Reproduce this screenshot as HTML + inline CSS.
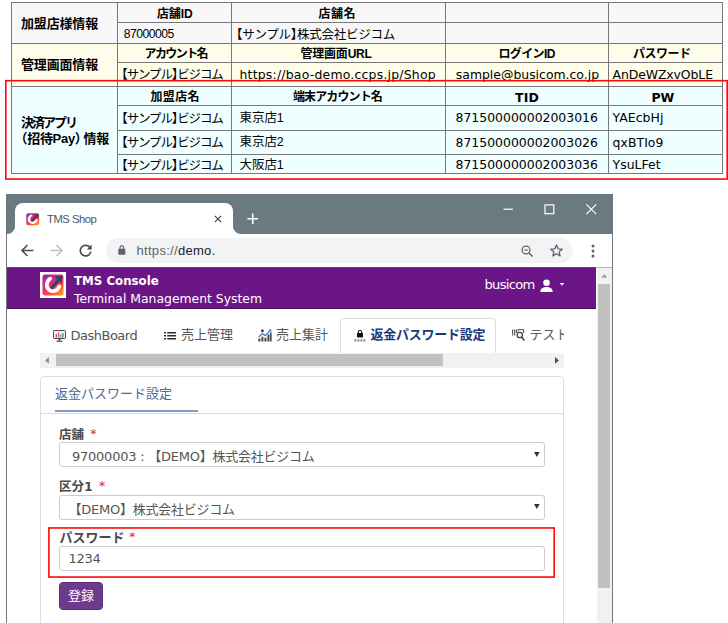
<!DOCTYPE html>
<html lang="ja">
<head>
<meta charset="utf-8">
<title>TMS Shop</title>
<style>
html,body{margin:0;padding:0;background:#fff;}
body{width:728px;height:623px;position:relative;overflow:hidden;font-family:"DejaVu Sans","Noto Sans CJK JP",sans-serif;}
.abs,#tbl div,#tbl span,#win div,#win span{position:absolute;}
#tbl,#win{position:absolute;left:0;top:0;width:728px;height:623px;}
/* ---------- table ---------- */
#tbl .bg{z-index:0;}
#tbl .hl{height:1px;background:#787878;z-index:1;}
#tbl .vl{width:1px;background:#787878;z-index:1;}
#tbl .t{z-index:2;white-space:nowrap;color:#000;line-height:16px;height:16px;}
#tbl .j{font-family:"Liberation Sans","Noto Sans CJK JP",sans-serif;}
#tbl .v{font-family:"DejaVu Sans","Noto Sans CJK JP",sans-serif;}
#tbl .b{font-weight:bold;}
#tbl i{font-style:normal;}
#tbl .lb{margin-left:-6px}#tbl .rb{margin-right:-6px}#tbl .lp{margin-left:-5px}#tbl .rp{margin-right:-4px}

/* ---------- browser window ---------- */
#win{font-family:"DejaVu Sans","Noto Sans CJK JP",sans-serif;}
#win .frame{left:6px;top:194px;width:607px;height:429px;background:#6a7a80;}
#win .page{left:7px;top:234px;width:605px;height:389px;background:#fff;}
#win .tab{left:15px;top:203px;width:218px;height:31px;background:#fff;border-radius:8px 8px 0 0;}
#win .tabl{left:7px;top:226px;width:8px;height:8px;background:radial-gradient(circle at 0 0,rgba(255,255,255,0) 7.5px,#fff 8.5px);}
#win .tabr{left:233px;top:226px;width:8px;height:8px;background:radial-gradient(circle at 100% 0,rgba(255,255,255,0) 7.5px,#fff 8.5px);}
#win .ttl{left:47px;top:210.5px;font:11.3px/16px "Liberation Sans",sans-serif;letter-spacing:-0.5px;color:#50555b;white-space:nowrap;}
#win svg{position:absolute;overflow:visible;}
#win .omni{left:106px;top:238px;width:467px;height:25px;border-radius:12.5px;background:#f1f3f4;}
#win .url{left:136.5px;top:241.5px;font:13px/18px "Liberation Sans",sans-serif;color:#5f6368;white-space:nowrap;letter-spacing:0.3px;}
#win .url b{font-weight:normal;color:#202124;}
#win .tbline{left:7px;top:267px;width:605px;height:1px;background:linear-gradient(to right,#46555e 589px,#b4b8ba 589px);}
#win .hdr{left:7px;top:268px;width:589px;height:41px;background:#6a1687;border-bottom:1px solid #4b1060;box-sizing:border-box;}
#win .logo{left:40px;top:272px;width:26px;height:26px;background:#fff;}
#win .h1{left:74px;top:273px;font-weight:bold;font-size:11.8px;line-height:16px;color:#fff;white-space:nowrap;}
#win .h2{left:74px;top:291px;font-size:12.4px;line-height:16px;color:#fff;white-space:nowrap;}
#win .usr{left:484.5px;top:276.5px;font-size:13.1px;letter-spacing:-0.72px;line-height:16px;color:#fff;white-space:nowrap;}
#win .vsb{left:597px;top:268px;width:15px;height:355px;background:#f1f1f1;}
#win .vth{left:598px;top:284px;width:12px;height:304px;background:#c1c1c1;}
#win .nav{white-space:nowrap;font-size:13px;line-height:18px;color:#555;}
#win .navact{left:340px;top:318px;width:156px;height:36px;border:1px solid #ddd;border-bottom:none;border-radius:4px 4px 0 0;box-sizing:border-box;background:#fff;}
#win .hsb{left:40px;top:353px;width:524px;height:15px;background:#f1f1f1;}
#win .hth{left:56px;top:354px;width:387px;height:12px;background:#c1c1c1;}
#win .panel{left:40px;top:376px;width:524px;height:260px;border:1px solid #ddd;border-radius:4px;box-sizing:border-box;background:#fff;}
#win .phl{left:41px;top:413px;width:522px;height:1px;background:#ddd;}
#win .pul{left:55px;top:410px;width:143px;height:2px;background:#7f9dc3;}
#win .ptt{left:55px;top:385px;font-size:13px;line-height:18px;color:#4d6a8f;white-space:nowrap;}
#win .lbl{font-size:12.5px;line-height:18px;font-weight:bold;color:#4a4a4a;white-space:nowrap;}
#win .lbl em{font-style:normal;font-weight:normal;color:#e02626;position:relative;top:-1px;margin-left:2px;}
#win .fld{left:59px;width:486px;height:25px;border:1px solid #ccc;border-radius:3px;box-sizing:border-box;background:#fff;}
#win .fv{font-size:13px;letter-spacing:-0.24px;line-height:18px;color:#555;white-space:nowrap;}
#win .btn{left:59px;top:582px;width:44px;height:28px;background:#6d3b8e;border:1px solid #5a2d78;border-radius:4px;box-sizing:border-box;}
#win .btt{left:68px;top:587px;font-size:13px;line-height:18px;color:#fff;white-space:nowrap;}
</style>
</head>
<body>
<div id="tbl">
  <!-- backgrounds -->
  <div class="bg" style="left:11px;top:2px;width:712px;height:42px;background:#f7f7f7"></div>
  <div class="bg" style="left:11px;top:43px;width:712px;height:44px;background:#fdfde9"></div>
  <div class="bg" style="left:11px;top:86px;width:712px;height:88px;background:#effefe"></div>
  <!-- horizontal lines -->
  <div class="hl" style="left:11px;top:2px;width:712px"></div>
  <div class="hl" style="left:117px;top:22px;width:606px"></div>
  <div class="hl" style="left:11px;top:43px;width:712px"></div>
  <div class="hl" style="left:117px;top:62px;width:606px"></div>
  <div class="hl" style="left:11px;top:86px;width:712px"></div>
  <div class="hl" style="left:117px;top:105px;width:606px"></div>
  <div class="hl" style="left:117px;top:130px;width:606px"></div>
  <div class="hl" style="left:117px;top:154px;width:606px"></div>
  <div class="hl" style="left:11px;top:173px;width:712px"></div>
  <!-- vertical lines -->
  <div class="vl" style="left:11px;top:2px;height:172px"></div>
  <div class="vl" style="left:117px;top:2px;height:172px"></div>
  <div class="vl" style="left:231px;top:2px;height:172px"></div>
  <div class="vl" style="left:445px;top:2px;height:172px"></div>
  <div class="vl" style="left:608px;top:2px;height:172px"></div>
  <div class="vl" style="left:722px;top:2px;height:172px"></div>
  <!-- text -->
  <span class="t j b" style="left:21.0px;top:15.5px;font-size:13px;letter-spacing:-0.17px">加盟店様情報</span>
  <span class="t j b" style="left:21.0px;top:57.2px;font-size:13px;letter-spacing:-0.17px">管理画面情報</span>
  <span class="t j b" style="left:21.0px;top:114.8px;font-size:13px;letter-spacing:-2.00px">決済アプリ</span>
  <span class="t j b" style="left:19.5px;top:130.6px;font-size:13px;letter-spacing:-0.30px"><i class="lp">（</i>招待Pay<i class="rp">）</i>情報</span>
  <span class="t j b" style="left:157.0px;top:6.1px;font-size:12px;letter-spacing:-0.13px">店舗ID</span>
  <span class="t j b" style="left:318.5px;top:6.1px;font-size:12px;letter-spacing:0.49px">店舗名</span>
  <span class="t j" style="left:123.8px;top:25.7px;font-size:12.2px;letter-spacing:-0.53px">87000005</span>
  <span class="t j" style="left:236.0px;top:26.5px;font-size:12.5px;letter-spacing:-0.26px"><i class="lb">【</i>サンプル<i class="rb">】</i>株式会社ビジコム</span>
  <span class="t j b" style="left:144.5px;top:46.3px;font-size:12px;letter-spacing:-1.59px">アカウント名</span>
  <span class="t j b" style="left:300.5px;top:46.3px;font-size:12px;letter-spacing:-0.21px">管理画面URL</span>
  <span class="t j b" style="left:498.5px;top:46.3px;font-size:12px;letter-spacing:-0.64px">ログインID</span>
  <span class="t j b" style="left:633.0px;top:46.3px;font-size:12px;letter-spacing:-0.50px">パスワード</span>
  <span class="t j" style="left:121.3px;top:67.0px;font-size:12.5px;letter-spacing:-1.12px"><i class="lb">【</i>サンプル<i class="rb">】</i>ビジコム</span>
  <span class="t v" style="left:239.5px;top:67.0px;font-size:12.45px;letter-spacing:0.21px">https://bao-demo.ccps.jp/Shop</span>
  <span class="t v" style="left:455.8px;top:67.0px;font-size:12.45px;letter-spacing:-0.01px">sample@busicom.co.jp</span>
  <span class="t v" style="left:612.5px;top:67.0px;font-size:12.45px;letter-spacing:-0.10px">AnDeWZxvObLE</span>
  <span class="t j b" style="left:150.5px;top:89.1px;font-size:12px;letter-spacing:0.37px">加盟店名</span>
  <span class="t j b" style="left:293.0px;top:89.1px;font-size:12px;letter-spacing:-0.88px">端末アカウント名</span>
  <span class="t v b" style="left:515.0px;top:89.5px;font-size:12.45px;letter-spacing:0.19px">TID</span>
  <span class="t v b" style="left:651.6px;top:89.5px;font-size:12.45px;letter-spacing:-0.22px">PW</span>
  <span class="t j" style="left:121.3px;top:111.0px;font-size:12.5px;letter-spacing:-1.12px"><i class="lb">【</i>サンプル<i class="rb">】</i>ビジコム</span>
  <span class="t j" style="left:239.5px;top:110.3px;font-size:12.5px;letter-spacing:-0.05px">東京店1</span>
  <span class="t v" style="left:455.5px;top:110.0px;font-size:12.45px;letter-spacing:0.00px">871500000002003016</span>
  <span class="t v" style="left:612.5px;top:110.0px;font-size:12.45px;letter-spacing:0.06px">YAEcbHj</span>
  <span class="t j" style="left:121.3px;top:135.0px;font-size:12.5px;letter-spacing:-1.12px"><i class="lb">【</i>サンプル<i class="rb">】</i>ビジコム</span>
  <span class="t j" style="left:239.5px;top:134.3px;font-size:12.5px;letter-spacing:-0.05px">東京店2</span>
  <span class="t v" style="left:455.5px;top:135.0px;font-size:12.45px;letter-spacing:0.00px">871500000002003026</span>
  <span class="t v" style="left:612.5px;top:135.0px;font-size:12.45px;letter-spacing:0.06px">qxBTIo9</span>
  <span class="t j" style="left:121.3px;top:157.5px;font-size:12.5px;letter-spacing:-1.12px"><i class="lb">【</i>サンプル<i class="rb">】</i>ビジコム</span>
  <span class="t j" style="left:239.5px;top:156.7px;font-size:12.5px;letter-spacing:-0.05px">大阪店1</span>
  <span class="t v" style="left:455.5px;top:157.2px;font-size:12.45px;letter-spacing:0.00px">871500000002003036</span>
  <span class="t v" style="left:612.5px;top:157.2px;font-size:12.45px;letter-spacing:0.04px">YsuLFet</span>
  <svg style="position:absolute;left:0;top:0;z-index:3" width="728" height="190" viewBox="0 0 728 190"><rect x="5.8" y="80.7" width="721.4" height="98.35" fill="none" stroke="#fb0a0a" stroke-width="1.6"/></svg>
</div>
<div id="win">
  <div class="frame"></div>
  <div class="page"></div>
  <!-- tab strip -->
  <div class="tab"></div><div class="tabl"></div><div class="tabr"></div>
  <svg style="left:26px;top:212.5px" width="13.5" height="12.5" viewBox="0 0 22 22" preserveAspectRatio="none">
    <defs><linearGradient id="lg1" x1="0.1" y1="0" x2="0.9" y2="1"><stop offset="0" stop-color="#9a1fb0"/><stop offset="0.45" stop-color="#ee2f6c"/><stop offset="0.75" stop-color="#ff5a2a"/><stop offset="1" stop-color="#ffa10f"/></linearGradient></defs>
    <rect x="0.5" y="0.5" width="21" height="21" rx="3" fill="url(#lg1)"/>
    <path d="M8.2 4.6 C4.4 7 3.6 12.4 6.6 15.4 C9.8 18.6 15.6 17.4 17.2 12.6" fill="none" stroke="#fff" stroke-width="4" stroke-linecap="round"/>
    <path d="M10 13.4 L16.6 6" stroke="#37406f" stroke-width="3.6" stroke-linecap="round"/>
    <path d="M12.4 2.6 L20.6 1.6 L19.6 9.8 Z" fill="#37406f"/>
  </svg>
  <span class="ttl">TMS Shop</span>
  <svg style="left:214.2px;top:214.7px" width="8" height="8" viewBox="0 0 10 10"><path d="M1 1 L9 9 M9 1 L1 9" stroke="#3c4043" stroke-width="1.4" fill="none"/></svg>
  <svg style="left:246.8px;top:213px" width="11.5" height="11.5" viewBox="0 0 13 13"><path d="M6.5 0.5 V12.5 M0.5 6.5 H12.5" stroke="#fff" stroke-width="1.8" fill="none"/></svg>
  <!-- window controls -->
  <svg style="left:502.5px;top:203px" width="12" height="12" viewBox="0 0 12 12"><path d="M0.5 6.2 H10" stroke="#fff" stroke-width="1.2"/></svg>
  <svg style="left:544px;top:204px" width="11" height="11" viewBox="0 0 11 11"><rect x="1" y="0.9" width="8.8" height="8.8" fill="none" stroke="#fff" stroke-width="1.2"/></svg>
  <svg style="left:585px;top:203px" width="12" height="12" viewBox="0 0 12 12"><path d="M1.4 1.4 L11.2 11.2 M11.2 1.4 L1.4 11.2" stroke="#fff" stroke-width="1.2" fill="none"/></svg>
  <!-- toolbar -->
  <svg style="left:21px;top:244px" width="13" height="13" viewBox="0 0 13 13"><path d="M12.5 6.5 H1.2 M6.5 1 L1 6.5 L6.5 12" stroke="#494c50" stroke-width="1.6" fill="none"/></svg>
  <svg style="left:50px;top:244px" width="13" height="13" viewBox="0 0 13 13"><path d="M0.5 6.5 H11.8 M6.5 1 L12 6.5 L6.5 12" stroke="#bdc1c6" stroke-width="1.6" fill="none"/></svg>
  <svg style="left:79px;top:244px" width="13" height="13" viewBox="0 0 13 13"><path d="M11.3 4.2 A5.3 5.3 0 1 0 11.8 7.6" stroke="#494c50" stroke-width="1.7" fill="none"/><path d="M12.6 0.6 V5.4 H7.8 Z" fill="#494c50"/></svg>
  <div class="omni"></div>
  <svg style="left:118.2px;top:245px" width="7.6" height="10" viewBox="0 0 9 12"><rect x="0.3" y="4.6" width="8.4" height="7" rx="1" fill="#5f6368"/><path d="M2.3 5 V3.2 A2.2 2.2 0 0 1 6.7 3.2 V5" fill="none" stroke="#5f6368" stroke-width="1.3"/></svg>
  <span class="url">https://<b>demo.</b></span>
  <svg style="left:521px;top:244.8px" width="12.5" height="12.5" viewBox="0 0 14 14"><circle cx="5.6" cy="5.6" r="4.4" fill="none" stroke="#5f6368" stroke-width="1.4"/><path d="M8.9 8.9 L13 13" stroke="#5f6368" stroke-width="1.6"/><path d="M3.4 5.6 H7.8" stroke="#5f6368" stroke-width="1.2"/></svg>
  <svg style="left:549px;top:243px" width="15" height="15" viewBox="0 0 24 24"><path d="M12 3.2 L14.6 9.3 L21.2 9.9 L16.2 14.2 L17.7 20.7 L12 17.2 L6.3 20.7 L7.8 14.2 L2.8 9.9 L9.4 9.3 Z" fill="none" stroke="#5f6368" stroke-width="2.1" stroke-linejoin="round"/></svg>
  <svg style="left:591px;top:244px" width="4" height="14" viewBox="0 0 4 14"><circle cx="2" cy="2" r="1.5" fill="#5f6368"/><circle cx="2" cy="7" r="1.5" fill="#5f6368"/><circle cx="2" cy="12" r="1.5" fill="#5f6368"/></svg>
  <div class="tbline"></div>
  <!-- page header -->
  <div class="hdr"></div>
  <div class="logo"></div>
  <svg style="left:42px;top:274px" width="22" height="22" viewBox="0 0 22 22">
    <defs><linearGradient id="lg2" x1="0.1" y1="0" x2="0.9" y2="1"><stop offset="0" stop-color="#9a1fb0"/><stop offset="0.45" stop-color="#ee2f6c"/><stop offset="0.75" stop-color="#ff5a2a"/><stop offset="1" stop-color="#ffa10f"/></linearGradient></defs>
    <rect x="0.5" y="0.5" width="21" height="21" rx="2.4" fill="url(#lg2)"/>
    <path d="M8.2 4.6 C4.4 7 3.6 12.4 6.6 15.4 C9.8 18.6 15.6 17.4 17.2 12.6" fill="none" stroke="#fff" stroke-width="3.7" stroke-linecap="round"/>
    <path d="M10 13.4 L16.6 6" stroke="#37406f" stroke-width="3.3" stroke-linecap="round"/>
    <path d="M12.4 2.6 L20.6 1.6 L19.6 9.8 Z" fill="#37406f"/>
  </svg>
  <span class="h1">TMS Console</span>
  <span class="h2">Terminal Management System</span>
  <span class="usr">busicom</span>
  <svg style="left:540px;top:279px" width="13" height="13" viewBox="0 0 13 13"><circle cx="6.5" cy="3.8" r="3.3" fill="#fff"/><path d="M0.3 13 C0.3 9.4 3 8 6.5 8 C10 8 12.7 9.4 12.7 13 Z" fill="#fff"/></svg>
  <svg style="left:558.5px;top:283px" width="6" height="3.2" viewBox="0 0 6 4"><path d="M0 0 H6 L3 3.6 Z" fill="#fff"/></svg>
  <!-- vertical scrollbar -->
  <div class="vsb"></div><div class="vth"></div>
  <svg style="left:600.8px;top:274px" width="6.6" height="3.8" viewBox="0 0 8 5"><path d="M0 5 L4 0 L8 5 Z" fill="#a0a0a0"/></svg>
  <!-- nav tabs -->
  <div class="navact"></div>
  <svg style="left:52.5px;top:329.5px" width="13" height="12" viewBox="0 0 13 12"><rect x="0.5" y="0.5" width="12" height="8" rx="0.8" fill="#f4f4f4" stroke="#4a4a4a"/><rect x="2.6" y="4" width="1.4" height="3.6" fill="#e0457b"/><rect x="4.9" y="2.4" width="1.4" height="5.2" fill="#e8604c"/><rect x="7.1" y="4.6" width="1.4" height="3" fill="#58b368"/><rect x="9.2" y="3" width="1.4" height="4.6" fill="#4a90d9"/><rect x="5.5" y="9" width="2" height="1.6" fill="#4a4a4a"/><rect x="3.5" y="10.6" width="6" height="1.2" fill="#4a4a4a"/></svg>
  <svg style="left:164px;top:331.5px" width="12" height="8" viewBox="0 0 12 8"><path d="M0 0.8 H2 M3.2 0.8 H12 M0 3.8 H2 M3.2 3.8 H12 M0 6.8 H2 M3.2 6.8 H12" stroke="#2a2a2a" stroke-width="1.5" fill="none"/></svg>
  <svg style="left:257.5px;top:329px" width="14" height="13" viewBox="0 0 14 13"><path d="M0.4 12.6 V9.4 H2.4 V12.6 Z M3.4 12.6 V7.8 H5.4 V12.6 Z M6.4 12.6 V8.8 H8.4 V12.6 Z M9.4 12.6 V5.6 H11.4 V12.6 Z M12 12.6 V3.4 H13.6 V12.6 Z" fill="#454545"/><path d="M0.6 8 L4.4 4.6 L7.2 6.6 L12.6 1" stroke="#3f7fd0" stroke-width="1.3" fill="none"/><path d="M10.6 0.4 H13.4 V3.2 Z" fill="#3f7fd0"/><circle cx="4.4" cy="1.8" r="1.5" fill="#454545"/></svg>
  <svg style="left:354px;top:329.5px" width="12" height="12" viewBox="0 0 12 12"><rect x="3" y="3" width="6" height="4.4" rx="0.6" fill="#111"/><path d="M4.3 3.2 V2.2 A1.7 1.7 0 0 1 7.7 2.2 V3.2" fill="none" stroke="#111" stroke-width="1.1"/><path d="M0.4 10.4 H2.4 M3.4 10.4 H5.4 M6.4 10.4 H8.4 M9.4 10.4 H11.4" stroke="#8a8a8a" stroke-width="2.2" stroke-dasharray="0"/></svg>
  <svg style="left:511.5px;top:329px" width="13" height="12" viewBox="0 0 13 12"><path d="M0.6 0.6 V6.6 M2.6 0.6 V6.6 M4.4 0.6 V4 M6 0.6 V2.4 M11.6 0.6 V4" stroke="#555" stroke-width="1.1" fill="none"/><path d="M6 0.6 H11.6" stroke="#555" stroke-width="1.1"/><circle cx="7.8" cy="6" r="2.7" fill="#fff" stroke="#444" stroke-width="1.3"/><path d="M9.8 8.2 L12.4 11.4" stroke="#444" stroke-width="1.6"/></svg>
  <span class="nav" style="left:70.5px;top:326.5px;font-size:13px;letter-spacing:-0.5px">DashBoard</span>
  <span class="nav" style="left:181px;top:325.7px">売上管理</span>
  <span class="nav" style="left:276px;top:325.7px">売上集計</span>
  <span class="nav" style="left:370.5px;top:325.5px;font-weight:bold;color:#1c3a78;letter-spacing:-0.25px">返金パスワード設定</span>
  <span class="nav" style="left:529.5px;top:325.7px;width:34.5px;overflow:hidden">テスト</span>
  <!-- horizontal scrollbar -->
  <div class="hsb"></div><div class="hth"></div>
  <svg style="left:45.4px;top:357px" width="3.9" height="6.8" viewBox="0 0 4 7"><path d="M4 0 V7 L0 3.5 Z" fill="#8c8c8c"/></svg>
  <svg style="left:555px;top:357px" width="3.9" height="6.8" viewBox="0 0 4 7"><path d="M0 0 V7 L4 3.5 Z" fill="#505050"/></svg>
  <!-- panel -->
  <div class="panel"></div>
  <span class="ptt">返金パスワード設定</span>
  <div class="pul"></div><div class="phl"></div>
  <span class="lbl" style="left:59px;top:425.5px">店舗 <em>*</em></span>
  <div class="fld" style="top:442px"></div>
  <span class="fv" style="left:72px;top:448px">97000003 : 【DEMO】株式会社ビジコム</span>
  <svg style="left:533.8px;top:451.5px" width="5.6" height="5" viewBox="0 0 7 6"><path d="M0 0 H7 L3.5 6 Z" fill="#333"/></svg>
  <span class="lbl" style="left:59px;top:477.5px">区分1 <em>*</em></span>
  <div class="fld" style="top:495px"></div>
  <span class="fv" style="left:68.5px;top:500.5px">【DEMO】株式会社ビジコム</span>
  <svg style="left:533.8px;top:504.3px" width="5.6" height="5" viewBox="0 0 7 6"><path d="M0 0 H7 L3.5 6 Z" fill="#333"/></svg>
  <span class="lbl" style="left:59.5px;top:529px;font-size:13px">パスワード <em style="margin-left:0px">*</em></span>
  <div class="fld" style="top:546px"></div>
  <span class="fv" style="left:68.5px;top:549.5px">1234</span>
  <div class="btn"></div>
  <span class="btt">登録</span>
  <svg style="left:0;top:500px" width="728" height="100" viewBox="0 500 728 100"><rect x="48.9" y="527.95" width="505.3" height="49.1" fill="none" stroke="#ff0606" stroke-width="1.6"/></svg>
</div>
</body>
</html>
